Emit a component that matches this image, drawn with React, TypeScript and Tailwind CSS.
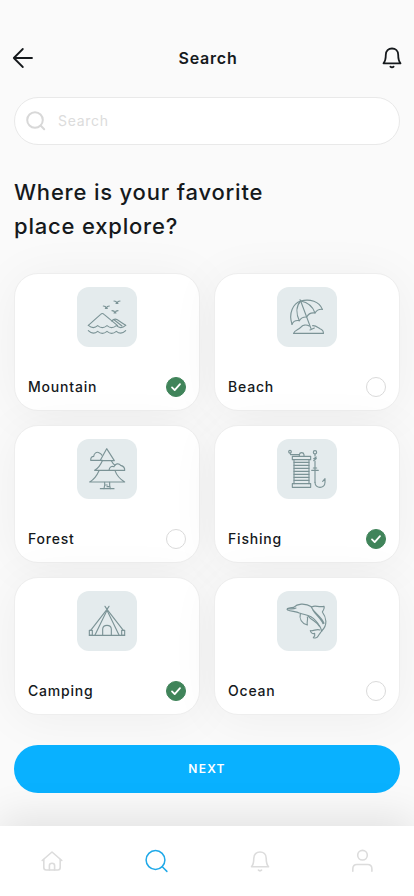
import React, { useState } from 'react';

const MountainArt = () => (
  <>
    <path d="M34 115 L71 82 Q76 77 81 82 L122 116" />
    <path d="M104 102 Q112 93 121 98 Q134 107 146 115" />
    <path d="M112 99 L135 117" />
    <path d="M34 115 Q49 128 62 116 Q76 128 90 116 Q104 128 118 116 Q132 128 146 115" />
    <path d="M34 131 Q48 145 62 133 Q76 145 90 133 Q104 145 118 133 Q132 145 146 131" />
    <path d="M111 42 Q118 42 120 48 Q122 42 129 42 M117 49 H123" />
    <path d="M79 57 Q86 57 88 63 Q90 57 97 57 M85 64 H91" />
    <path d="M105 71 Q112 71 114 77 Q116 71 123 71 M111 78 H117" />
  </>
);

const BeachArt = () => (
  <>
    <path d="M45 112 C34 78 48 50 71 42 C99 34 127 44 136 67" />
    <path d="M45 112 Q51 98 67 101 Q74 89 89 90 Q97 75 114 78 Q121 66 136 67" />
    <path d="M71 42 C56 58 58 82 67 101" />
    <path d="M71 42 C92 46 108 60 114 78" />
    <path d="M69 38 L71 42 L102 125 M99 129 L112 123" />
    <path d="M50 139 C52 129 64 129 71 121 C77 114 88 112 97 117 M107 116 C116 115 122 121 129 125 C136 128 140 133 139 139" />
    <path d="M50 139 H139" />
  </>
);

const ForestArt = () => (
  <>
    <path d="M70 64 L89 29 L112 65 H76" />
    <path d="M76 64 H41 C41 56 45 52 50 52 C51 43 59 37 66 41 C70 43 73 45 75 49" />
    <path d="M76 65 C71 77 64 87 53 94 H96 M103 65 C106 71 109 75 114 79" />
    <path d="M96 94 C97 84 104 80 111 83 C114 73 126 72 131 79 C138 81 144 85 143 94 H96" />
    <path d="M66 95 C60 109 51 121 38 129 H143 C128 120 119 109 114 95" />
    <path d="M83 130 C84 137 83 143 81 149 M98 130 C97 137 99 144 100 149 M86 138 H91 M90 143 H96" />
    <path d="M70 149 H111" />
  </>
);

const FishingArt = () => (
  <>
    <rect x="46" y="52" width="55" height="10" />
    <rect x="46" y="134" width="55" height="11" />
    <path d="M51 62 V134 M96 62 V134" />
    <path d="M51 70 H96 M51 79 H96 M51 88 H96 M51 97 H96 M51 106 H96 M51 115 H96 M51 124 H96" />
    <circle cx="39" cy="38" r="4" />
    <path d="M39 42 L41 47 H67 M67 52 V47 Q68 41 74 41 Q80 41 81 47 V52" />
    <circle cx="114" cy="40" r="5" />
    <path d="M114 45 V51 M118 54 L110 59 L118 59 L110 65 M114 66 V130" />
    <path d="M109 87 H119 M104 94 H124" />
    <path d="M114 130 C114 150 144 150 144 130 V119 L137 127" />
  </>
);

const CampingArt = () => (
  <>
    <path d="M84 46 L90 55 L139 118 M96 46 L90 55 L41 118" />
    <path d="M90 58 L54 132 M90 58 L126 132" />
    <path d="M37 118 H46 V133 H37 Z M134 118 H143 V133 H134 Z" />
    <path d="M37 133 H143" />
    <path d="M77 133 V114 Q78 103 90 103 Q102 103 103 114 V133" />
  </>
);

const OceanArt = () => (
  <>
    <path d="M31 56 C29 52 34 51 50 49 C60 39 82 34 105 48 C113 41 125 50 141 46 C143 51 138 60 136 63 C148 79 153 102 134 120" />
    <path d="M31 56 C42 62 56 60 67 66 C86 73 100 70 115 88 C124 98 132 109 134 120" />
    <path d="M34 53 C44 54 52 54 57 51" />
    <path d="M70 69 C66 83 74 98 91 102 C88 93 94 87 91 78" />
    <path d="M103 49 C112 67 132 75 141 97 M107 56 C116 72 132 83 138 98" />
    <path d="M94 76 C105 89 119 91 127 106" />
    <path d="M134 120 C130 126 126 130 124 134 C121 140 114 142 109 140 C115 134 114 130 113 127 C107 130 101 125 100 119 C111 120 119 113 129 117" />
  </>
);

const PLACES = [
  { id: 'mountain', name: 'Mountain', art: <MountainArt /> },
  { id: 'beach', name: 'Beach', art: <BeachArt /> },
  { id: 'forest', name: 'Forest', art: <ForestArt /> },
  { id: 'fishing', name: 'Fishing', art: <FishingArt /> },
  { id: 'camping', name: 'Camping', art: <CampingArt /> },
  { id: 'ocean', name: 'Ocean', art: <OceanArt /> },
];

const BellIcon = ({ className }: { className: string }) => (
  <svg viewBox="0 0 20 22" className={className} fill="none" stroke="currentColor" strokeLinecap="round" strokeLinejoin="round" aria-hidden="true">
    <path d="M1.5 16.3 C3.2 14.4 3.8 12 3.8 7.8 C3.8 3.9 6.5 1.5 10 1.5 C13.5 1.5 16.2 3.9 16.2 7.8 C16.2 12 16.8 14.4 18.5 16.3 Z" />
    <path d="M8.4 19.6 C9.2 20.6 10.8 20.6 11.6 19.6" />
  </svg>
);

type PlaceCardProps = {
  name: string;
  art: React.ReactNode;
  checked: boolean;
  onToggle: () => void;
};

const PlaceCard: React.FC<PlaceCardProps> = ({ name, art, checked, onToggle }) => (
  <label className="flex cursor-pointer flex-col gap-[30px] rounded-3xl border border-[#eeeeee] bg-white p-[13px] shadow-[0_4px_50px_rgba(0,0,0,0.05)]">
    <span className="flex size-[60px] items-center justify-center self-center rounded-xl bg-[#e4ebed]">
      <svg viewBox="0 0 180 180" className="size-full text-[#7b9396]" fill="none" stroke="currentColor" strokeWidth="3.4" strokeLinecap="round" strokeLinejoin="round" aria-hidden="true">
        {art}
      </svg>
    </span>
    <span className="flex items-center justify-between">
      <span className="text-sm leading-5 font-medium">{name}</span>
      <span className="relative flex size-5">
        <input
          type="checkbox"
          checked={checked}
          onChange={onToggle}
          className="size-5 cursor-pointer appearance-none rounded-full border border-[#dadada] bg-white checked:border-[#40845a] checked:bg-[#40845a]"
        />
        {checked && (
          <svg viewBox="0 0 20 20" className="pointer-events-none absolute inset-0 size-5 text-white" fill="none" stroke="currentColor" strokeWidth="1.8" strokeLinecap="round" strokeLinejoin="round" aria-hidden="true">
            <path d="M6 10.4 L8.7 13.1 L14 7.2" />
          </svg>
        )}
      </span>
    </span>
  </label>
);

export default function App() {
  const [query, setQuery] = useState('');
  const [selected, setSelected] = useState<string[]>(['mountain', 'fishing', 'camping']);

  const toggle = (id: string) => {
    setSelected(selected.includes(id) ? selected.filter((s) => s !== id) : [...selected, id]);
  };

  return (
    <div className="flex min-h-screen flex-col bg-[#fafafa] font-['Inter',sans-serif] tracking-wider text-[#15191c]">
      <header className="flex items-center justify-between px-3 pt-8">
        <button type="button" aria-label="Back" className="flex h-[52px] items-center">
          <svg viewBox="0 0 22 22" className="size-[22px]" fill="none" stroke="currentColor" strokeWidth="1.8" strokeLinecap="round" strokeLinejoin="round" aria-hidden="true">
            <path d="M20 11 H1.8 M10.8 2 L1.8 11 L10.8 20" />
          </svg>
        </button>
        <h1 className="text-base font-semibold">Search</h1>
        <button type="button" aria-label="Notifications" className="flex h-[52px] items-center">
          <BellIcon className="h-[22px] w-5 stroke-[1.8]" />
        </button>
      </header>

      <main className="px-3.5 pt-[13px]">
        <label className="flex h-12 items-center gap-3 rounded-full border border-[#e9e9e9] bg-white px-[11px]">
          <svg viewBox="0 0 20 20" className="size-5 shrink-0 text-[#d8d8d8]" fill="none" stroke="currentColor" strokeWidth="2" strokeLinecap="round" aria-hidden="true">
            <circle cx="9" cy="9" r="7.8" />
            <path d="M14.8 14.8 L18.2 18.2" />
          </svg>
          <input
            type="search"
            aria-label="Search"
            placeholder="Search"
            value={query}
            onChange={(e) => setQuery(e.target.value)}
            className="min-w-0 flex-1 bg-transparent text-sm tracking-wider outline-none placeholder:text-[#dcdcdc]"
          />
        </label>

        <h2 className="mt-[30px] max-w-[300px] text-[22px] leading-[34px] font-medium">
          Where is your favorite place explore?
        </h2>

        <div className="mt-[30px] grid grid-cols-2 gap-3.5">
          {PLACES.map((place) => (
            <PlaceCard
              key={place.id}
              name={place.name}
              art={place.art}
              checked={selected.includes(place.id)}
              onToggle={() => toggle(place.id)}
            />
          ))}
        </div>

        <button type="button" className="mt-[30px] h-12 w-full rounded-full bg-[#09b1ff] text-xs font-semibold tracking-widest text-white">
          NEXT
        </button>
      </main>

      <div className="mt-auto pt-[33px]">
        <nav className="flex h-[70px] items-center justify-around bg-white text-[#dcdcdc] shadow-[0_-8px_40px_rgba(0,0,0,0.1)]">
          <a href="#home" aria-label="Home">
            <svg viewBox="0 0 22 22" className="size-[22px]" fill="none" stroke="currentColor" strokeWidth="1.6" strokeLinecap="round" strokeLinejoin="round" aria-hidden="true">
              <path d="M1.2 10.5 L11 2 L20.8 10.5" />
              <path d="M2.8 9.5 V17.5 Q2.8 20 5.3 20 H16.7 Q19.2 20 19.2 17.5 V9.5" />
              <path d="M8.4 20 V15.5 Q8.4 13.2 11 13.2 Q13.6 13.2 13.6 15.5 V20" />
            </svg>
          </a>
          <a href="#search" aria-label="Search" className="text-[#20a9e8]">
            <svg viewBox="0 0 24 24" className="size-6" fill="none" stroke="currentColor" strokeWidth="1.5" strokeLinecap="round" aria-hidden="true">
              <circle cx="11.5" cy="11" r="9.4" />
              <path d="M18.3 17.8 L22.9 22.4" />
            </svg>
          </a>
          <a href="#notifications" aria-label="Notifications">
            <BellIcon className="h-[23px] w-5 stroke-[1.6]" />
          </a>
          <a href="#profile" aria-label="Profile">
            <svg viewBox="0 0 22 24" className="h-6 w-[22px]" fill="none" stroke="currentColor" strokeWidth="1.6" strokeLinecap="round" strokeLinejoin="round" aria-hidden="true">
              <circle cx="11.5" cy="6.2" r="4.8" />
              <path d="M1.8 22.3 V20 Q1.8 15.5 6 15.5 H16.6 Q20.9 15.5 20.9 20 V22.3" />
            </svg>
          </a>
        </nav>
      </div>
    </div>
  );
}
